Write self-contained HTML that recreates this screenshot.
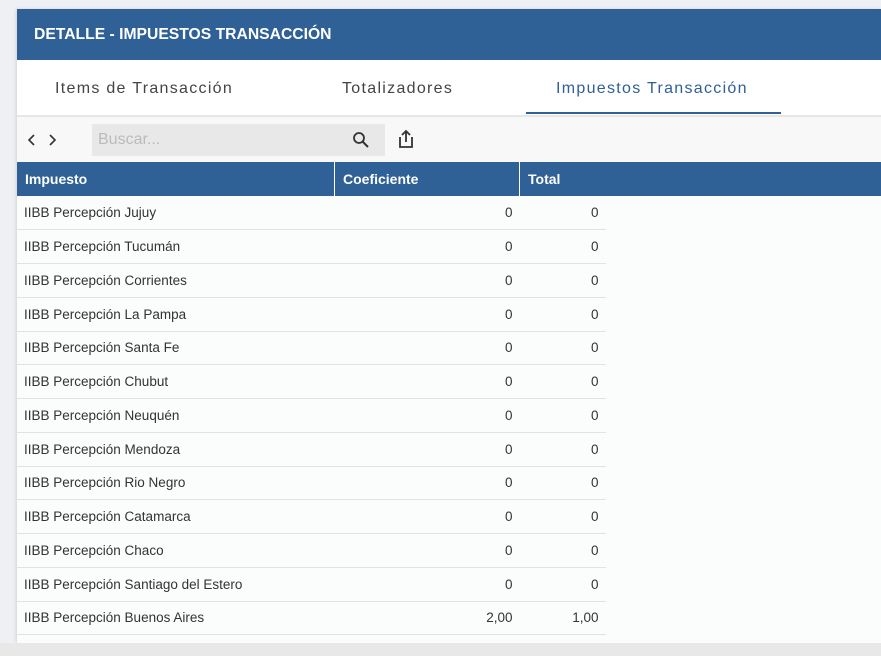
<!DOCTYPE html>
<html><head><style>
body{margin:0;width:881px;height:656px;background:#eef0f3;font-family:"Liberation Sans",Arial,sans-serif;overflow:hidden;position:relative}
.panel{position:absolute;left:17px;top:9px;right:0;height:634px;background:#fbfcfc;box-shadow:-1px 0 3px rgba(0,0,0,.12)}
.hdr{height:51px;background:#2f6096;color:#fff;font-weight:bold;font-size:15.7px;line-height:51px;padding-left:17px}
.tabs{height:55px;background:#fff;border-bottom:2px solid #e6e6e6;position:relative}
.tab{position:absolute;top:0;line-height:57px;font-size:16px;color:#444;letter-spacing:1.3px}
.ul{position:absolute;left:509px;top:52px;width:255px;height:2px;background:#2f6096}
.tb{height:45px;background:#f8f8f8;position:relative}
.search{position:absolute;left:75px;top:7px;width:293px;height:32px;background:#e8e8e8;color:#bbb;font-size:16px;line-height:32px;padding-left:6px;box-sizing:border-box}
table{border-collapse:collapse;font-size:13.5px;color:#333}
th{background:#2f6096;color:#fff;text-align:left;height:34px;padding:0 0 0 8px;font-size:14px;border-right:1px solid #fff}
td{height:32.75px;border-bottom:1px solid #e2e2e2;padding:0 7px;background:#fbfcfc;box-sizing:border-box}
tr.r{height:33.75px}
td.n{text-align:right}
.hbar{position:absolute;left:605px;right:0;top:162px;height:34px;background:#2f6096}
.bot{position:absolute;left:0;right:0;top:643px;bottom:0;background:#e8e8e8}
</style></head><body>
<div class="panel">
<div class="hdr">DETALLE - IMPUESTOS TRANSACCIÓN</div>
<div class="tabs">
<div class="tab" style="left:38px">Items de Transacción</div>
<div class="tab" style="left:325px">Totalizadores</div>
<div class="tab" style="left:539px;color:#2f6096">Impuestos Transacción</div>
<div class="ul"></div>
</div>
<div class="tb">
<svg style="position:absolute;left:10px;top:15px" width="30" height="16" viewBox="0 0 30 16"><path d="M7 3 2 8l5 5M23 3l5 5-5 5" fill="none" stroke="#333" stroke-width="1.6"/></svg>
<div class="search">Buscar...</div>
<svg style="position:absolute;left:335px;top:14px" width="18" height="18" viewBox="0 0 18 18"><circle cx="7" cy="7" r="5" fill="none" stroke="#333" stroke-width="1.8"/><path d="M10.5 10.5 16 16" stroke="#333" stroke-width="2"/></svg>
<svg style="position:absolute;left:380px;top:12px" width="18" height="20" viewBox="0 0 18 20"><path d="M3 8v10h12V8M9 13V2M5 6l4-4 4 4" fill="none" stroke="#333" stroke-width="1.8"/></svg>
</div>
<table>
<tr><th style="width:309px">Impuesto</th><th style="width:176px">Coeficiente</th><th style="width:77px">Total</th></tr>
<tr class="r"><td>IIBB Percepción Jujuy</td><td class="n">0</td><td class="n">0</td></tr>
<tr class="r"><td>IIBB Percepción Tucumán</td><td class="n">0</td><td class="n">0</td></tr>
<tr class="r"><td>IIBB Percepción Corrientes</td><td class="n">0</td><td class="n">0</td></tr>
<tr class="r"><td>IIBB Percepción La Pampa</td><td class="n">0</td><td class="n">0</td></tr>
<tr class="r"><td>IIBB Percepción Santa Fe</td><td class="n">0</td><td class="n">0</td></tr>
<tr class="r"><td>IIBB Percepción Chubut</td><td class="n">0</td><td class="n">0</td></tr>
<tr class="r"><td>IIBB Percepción Neuquén</td><td class="n">0</td><td class="n">0</td></tr>
<tr class="r"><td>IIBB Percepción Mendoza</td><td class="n">0</td><td class="n">0</td></tr>
<tr class="r"><td>IIBB Percepción Rio Negro</td><td class="n">0</td><td class="n">0</td></tr>
<tr class="r"><td>IIBB Percepción Catamarca</td><td class="n">0</td><td class="n">0</td></tr>
<tr class="r"><td>IIBB Percepción Chaco</td><td class="n">0</td><td class="n">0</td></tr>
<tr class="r"><td>IIBB Percepción Santiago del Estero</td><td class="n">0</td><td class="n">0</td></tr>
<tr class="r"><td>IIBB Percepción Buenos Aires</td><td class="n">2,00</td><td class="n">1,00</td></tr>
</table>
</div>
<div class="hbar"></div>
<div class="bot"></div>
</body></html>
